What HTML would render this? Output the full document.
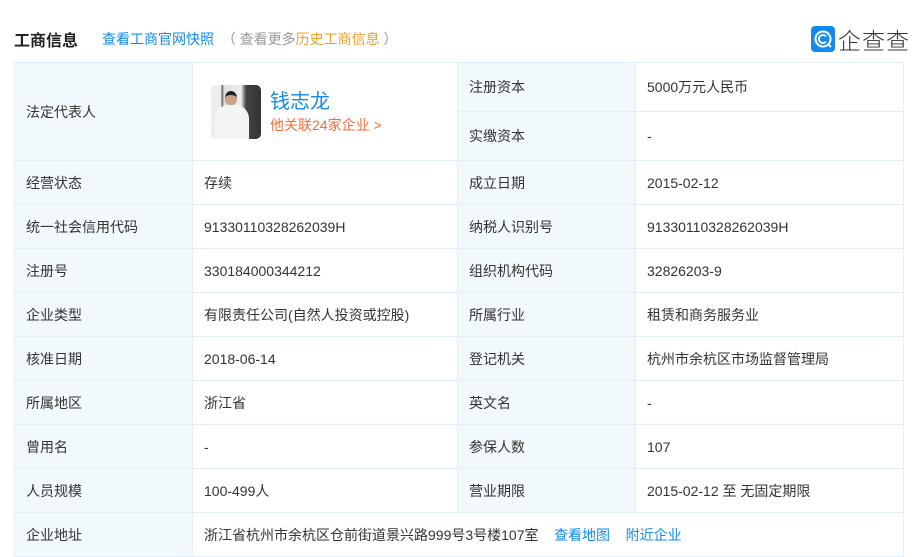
<!DOCTYPE html>
<html><head><meta charset="utf-8"><style>
*{margin:0;padding:0;box-sizing:border-box}
body{width:918px;height:555px;overflow:hidden;background:#fff;font-family:"Liberation Sans","Noto Sans CJK SC",sans-serif;font-size:14px;color:#333;position:relative}
.hd{position:absolute;top:27px;left:14px;font-size:16px;font-weight:bold;color:#222}
.lk{position:absolute;top:29px;left:102px;font-size:14px;color:#128bed}
.gy{color:#999}.or{color:#f09f2b}
.logo{position:absolute;top:22px;left:811px;display:flex;align-items:center}
.logo .ic{width:24px;height:26px;background:#128bed;border-radius:4px;position:relative}
.logo span{font-size:23px;color:#333;margin-left:3px;letter-spacing:1px;font-weight:300}
table{position:absolute;top:62px;left:14px;width:889px;border-collapse:collapse;table-layout:fixed}
td{border:1px solid #e4eef6;padding:0 0 0 11px;height:44px;vertical-align:middle;white-space:nowrap}
td.l{background:#f2f9fc}
.b{color:#128bed}
</style></head><body>
<div class="hd">工商信息</div>
<div class="lk">查看工商官网快照 <span class="gy">&nbsp;（ 查看更多</span><span class="or">历史工商信息</span><span class="gy"> ）</span></div>
<div class="logo"><div class="ic"><svg width="24" height="26" viewBox="0 0 24 26"><circle cx="12" cy="13" r="7.5" fill="none" stroke="#fff" stroke-width="2"/><path d="M15 10.5a4 4 0 1 0 0 5" fill="none" stroke="#fff" stroke-width="1.8"/><path d="M17 18l3 3" stroke="#fff" stroke-width="2"/></svg></div><span>企查查</span></div>
<table>
<colgroup><col style="width:178px"><col style="width:265px"><col style="width:178px"><col style="width:268px"></colgroup>
<tr><td class="l" rowspan="2">法定代表人</td><td rowspan="2" style="padding-left:18px">
<div style="display:flex;align-items:center">
<div style="width:50px;height:54px;border-radius:5px;background:linear-gradient(90deg,#eee 0,#eee 20%,#555 22%,#ddd 26%,#eee 60%,#444 70%,#333 100%);position:relative;overflow:hidden">
<div style="position:absolute;left:14px;top:6px;width:12px;height:14px;border-radius:50% 50% 40% 40%;background:#c9a48a;border-top:4px solid #222"></div>
<div style="position:absolute;left:4px;top:20px;width:34px;height:34px;border-radius:40% 40% 0 0;background:#f4f4f4"></div>
</div>
<div style="margin-left:9px"><div style="font-size:20px;color:#128bed;line-height:26px">钱志龙</div><div style="font-size:14px;line-height:20px;color:#f0703c">他关联24家企业 &gt;</div></div>
</div></td><td class="l" style="height:49px">注册资本</td><td style="height:49px">5000万元人民币</td></tr>
<tr><td class="l" style="height:49px">实缴资本</td><td style="height:49px">-</td></tr>
<tr><td class="l">经营状态</td><td>存续</td><td class="l">成立日期</td><td>2015-02-12</td></tr>
<tr><td class="l">统一社会信用代码</td><td>91330110328262039H</td><td class="l">纳税人识别号</td><td>91330110328262039H</td></tr>
<tr><td class="l">注册号</td><td>330184000344212</td><td class="l">组织机构代码</td><td>32826203-9</td></tr>
<tr><td class="l">企业类型</td><td>有限责任公司(自然人投资或控股)</td><td class="l">所属行业</td><td>租赁和商务服务业</td></tr>
<tr><td class="l">核准日期</td><td>2018-06-14</td><td class="l">登记机关</td><td>杭州市余杭区市场监督管理局</td></tr>
<tr><td class="l">所属地区</td><td>浙江省</td><td class="l">英文名</td><td>-</td></tr>
<tr><td class="l">曾用名</td><td>-</td><td class="l">参保人数</td><td>107</td></tr>
<tr><td class="l">人员规模</td><td>100-499人</td><td class="l">营业期限</td><td>2015-02-12 至 无固定期限</td></tr>
<tr><td class="l">企业地址</td><td colspan="3">浙江省杭州市余杭区仓前街道景兴路999号3号楼107室 &nbsp;&nbsp;&nbsp;<span class="b">查看地图</span> &nbsp;&nbsp;&nbsp;<span class="b">附近企业</span></td></tr>
</table>
</body></html>
